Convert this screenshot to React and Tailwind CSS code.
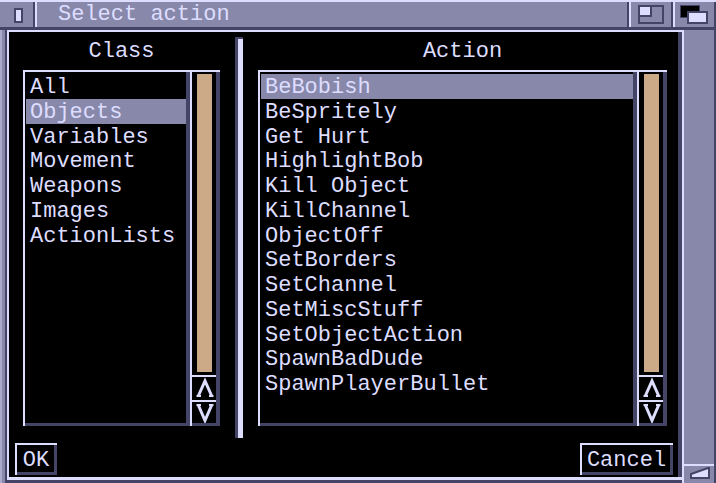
const classes = ['All', 'Objects', 'Variables', 'Movement', 'Weapons', 'Images', 'ActionLists'];
const actions = [
  'BeBobish',
  'BeSpritely',
  'Get Hurt',
  'HighlightBob',
  'Kill Object',
  'KillChannel',
  'ObjectOff',
  'SetBorders',
  'SetChannel',
  'SetMiscStuff',
  'SetObjectAction',
  'SpawnBadDude',
  'SpawnPlayerBullet',
];

function ListBox({ items, selected, width }) {
  return (
    <div
      className="h-[356px] pt-[4px] pl-[3px] pr-[4px] bg-black shadow-[inset_2px_2px_0_#ddddff,inset_-4px_-3px_0_#444466]"
      style={{ width }}
    >
      {items.map((item, i) => (
        <div
          key={item}
          className={`h-[24.75px] pt-[2px] leading-[24.75px] pl-[4px] whitespace-pre ${i === selected ? 'bg-[#8888aa]' : ''}`}
        >
          {item}
        </div>
      ))}
    </div>
  );
}

function ScrollBar() {
  return (
    <div className="w-[30px] h-[356px] flex flex-col pt-[2px] pl-[2px] pr-[4px] pb-[3px] bg-black shadow-[inset_2px_2px_0_#ddddff,inset_-4px_-3px_0_#444466]">
      <div className="flex-1 pt-[2px] pb-[3px] pl-[5px]">
        <div className="w-[15px] h-full bg-[#ccaa88]" />
      </div>
      <div className="h-[25px] border-t-2 border-[#ddddff]">
        <svg width="24" height="23" viewBox="0 0 24 23">
          <path d="M6.5 18.5 L13 4 L19.5 18.5" fill="none" stroke="#ddddff" strokeWidth="3" strokeLinejoin="miter" />
          <path d="M4.5 19 H9 M17 19 H21.5" stroke="#ddddff" strokeWidth="2" />
        </svg>
      </div>
      <div className="h-[23px] border-t-2 border-[#ddddff]">
        <svg width="24" height="21" viewBox="0 0 24 21">
          <path d="M6.5 3.5 L13 18.5 L19.5 3.5" fill="none" stroke="#ddddff" strokeWidth="3" strokeLinejoin="miter" />
          <path d="M4.5 3 H9 M17 3 H21.5" stroke="#ddddff" strokeWidth="2" />
        </svg>
      </div>
    </div>
  );
}

function Button({ children, width }) {
  return (
    <div
      className="h-[32px] pt-[6px] flex justify-center leading-[24.75px] bg-black shadow-[inset_2px_2px_0_#ddddff,inset_-3px_-3px_0_#444466]"
      style={{ width }}
    >
      {children}
    </div>
  );
}

export default function App() {
  return (
    <div className="w-[716px] h-[483px] flex flex-col bg-[#8888aa] text-[#ddddff] text-[22px] font-['Liberation_Mono','DejaVu_Sans_Mono',monospace] overflow-hidden">
      {/* Title bar */}
      <div className="h-[30px] flex border-t-2 border-t-[#ddddff] border-b-[3px] border-b-[#444466]">
        <div className="w-[33px] pl-[14px] pt-[6px]">
          <div className="w-[9px] h-[15px] border-2 border-[#444466] bg-[#ddddff]" />
        </div>
        <div className="w-[4px] flex">
          <div className="w-[2px] bg-[#444466]" />
          <div className="w-[2px] bg-[#ddddff]" />
        </div>
        <div className="flex-1 pl-[21px] pt-[1px] leading-[24.75px] whitespace-pre">Select action</div>
        <div className="w-[4px] flex">
          <div className="w-[2px] bg-[#444466]" />
          <div className="w-[2px] bg-[#ddddff]" />
        </div>
        <div className="w-[40px]">
          <svg width="40" height="25" viewBox="0 0 40 25">
            <rect x="8" y="4" width="24" height="17" fill="none" stroke="#444466" strokeWidth="2" />
            <rect x="8" y="4" width="12" height="10" fill="#ddddff" stroke="#444466" strokeWidth="2" />
          </svg>
        </div>
        <div className="w-[4px] flex">
          <div className="w-[2px] bg-[#444466]" />
          <div className="w-[2px] bg-[#ddddff]" />
        </div>
        <div className="w-[39px]">
          <svg width="39" height="25" viewBox="0 0 39 25">
            <rect x="5.5" y="3.5" width="19" height="12" fill="#000" stroke="#444466" strokeWidth="1" />
            <rect x="13" y="10" width="19" height="11" fill="#ddddff" stroke="#444466" strokeWidth="2" />
          </svg>
        </div>
        <div className="w-[2px] bg-[#444466]" />
      </div>

      {/* Body */}
      <div className="flex-1 flex">
        <div className="w-[7px] flex">
          <div className="w-[2px] bg-[#aaaacc]" />
          <div className="w-[3px]" />
          <div className="w-[2px] bg-[#444466]" />
        </div>

        <div className="w-[675px] flex flex-col">
          <div className="h-[450px] flex flex-col pt-[2px] pl-[2px] pr-[4px] pb-[3px] bg-black shadow-[inset_2px_2px_0_#ddddff,inset_0_-3px_0_#ddddff,inset_-4px_0_0_#444466]">
            <div className="mt-[5px] h-[401px] flex">
              {/* Class column */}
              <div className="ml-[14px] w-[197px] pt-[1px] flex flex-col">
                <div className="h-[32px] pt-[2px] leading-[24.75px] text-center">Class</div>
                <div className="flex">
                  <ListBox items={classes} selected={1} width={167} />
                  <ScrollBar />
                </div>
              </div>

              {/* Divider */}
              <div className="ml-[15px] w-[8px] h-full bg-[#ddddff] shadow-[inset_3px_2px_0_#444466]" />

              {/* Action column */}
              <div className="ml-[15px] w-[409px] pt-[1px] flex flex-col">
                <div className="h-[32px] pt-[2px] leading-[24.75px] text-center">Action</div>
                <div className="flex">
                  <ListBox items={actions} selected={0} width={379} />
                  <ScrollBar />
                </div>
              </div>
            </div>

            <div className="mt-[5px] pl-[6px] pr-[5px] flex justify-between">
              <Button width={42}>OK</Button>
              <Button width={93}>Cancel</Button>
            </div>
          </div>
          <div className="flex-1 bg-[#444466]" />
        </div>

        <div className="w-[34px] flex flex-col border-l-2 border-l-[#ddddff] border-r-2 border-r-[#444466]">
          <div className="flex-1" />
          <div className="h-[19px] border-t-2 border-[#ddddff]">
            <svg width="30" height="17" viewBox="0 0 30 17">
              <polygon points="7,12 7,8 24,2 25,2 25,12" fill="#ddddff" stroke="#444466" strokeWidth="2" />
            </svg>
          </div>
        </div>
      </div>
    </div>
  );
}
